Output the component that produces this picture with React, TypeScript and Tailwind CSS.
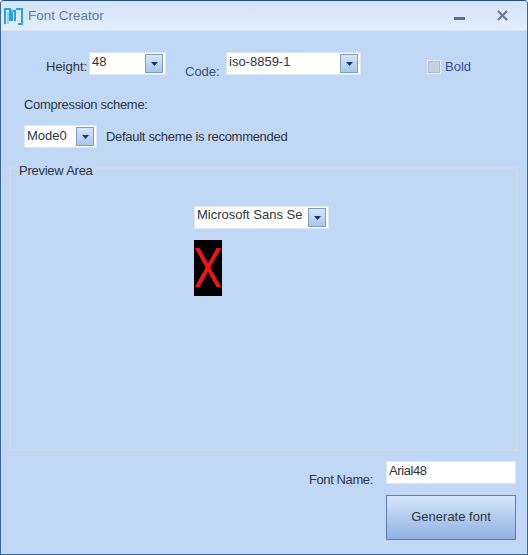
function ComboArrow() {
  return (
    <div className="flex h-[19px] w-[18px] shrink-0 items-center justify-center border border-[#7f9db9] bg-gradient-to-b from-[#d7e6fa] to-[#a9c6ee]">
      <svg width="7" height="4" viewBox="0 0 7 4">
        <path d="M0 0h7L3.5 4z" fill="#15356b" />
      </svg>
    </div>
  );
}

function Combo({ value, className, textClass = "-mt-[3px]" }: { value: string; className: string; textClass?: string }) {
  return (
    <div className={`flex h-[23px] items-center justify-between overflow-hidden border border-[#dbe7f6] bg-white pl-[2px] pr-[2px] text-[#30353c] ${className}`}>
      <span className={`whitespace-nowrap ${textClass}`}>{value}</span>
      <ComboArrow />
    </div>
  );
}

export default function App() {
  return (
    <div className="flex h-[555px] w-[528px] flex-col overflow-hidden rounded-t-[4px] border border-x-[#3d6694] border-b-[#3d6694] border-t-[#1d4f86] bg-[#c0d8f6] text-[13px] leading-[20px] text-[#2f343b] [font-family:'Liberation_Sans',Arial,sans-serif]">
      <div className="flex h-[30px] shrink-0 items-center justify-between border-b border-[#d4e4f9] bg-gradient-to-b from-[#d3e3f9] to-[#e3eefc] pl-[3px] pr-[19px]">
        <div className="flex items-center gap-[4px]">
          <svg width="20" height="20" viewBox="0 0 20 20" fill="none">
            <path d="M1 18V3h5v11h2V5h3v10" stroke="#2aa0dc" strokeWidth="2" />
            <path d="M12 3h6v15h-4" stroke="#2aa0dc" strokeWidth="2" />
            <path d="M4 6v12M8 3v3" stroke="#7cc8ee" strokeWidth="1.5" />
          </svg>
          <span className="text-[13.5px] text-[#5f7c9f]">Font Creator</span>
        </div>
        <div className="flex items-center gap-[32px]">
          <div className="mt-[5px] h-[3px] w-[11px] bg-[#5c6f86]" />
          <svg width="11" height="11" viewBox="0 0 12 12">
            <path d="M1 1l10 10M11 1L1 11" stroke="#66788f" strokeWidth="2.4" />
          </svg>
        </div>
      </div>

      <div className="flex items-start pl-[45px] pt-[21px]">
        <span className="mt-[5px] w-[43px]">Height:</span>
        <Combo value="48" className="w-[77px]" />
        <span className="ml-[19px] mt-[10px] w-[41px] text-[#36537f]">Code:</span>
        <Combo value="iso-8859-1" className="w-[135px]" />
        <div className="ml-[66px] mt-[5px] flex items-center gap-[4px] text-[#36509a]">
          <div className="flex h-[14px] w-[14px] items-center justify-center border border-[#e8eef6] bg-[#aebccf]">
            <div className="h-[10px] w-[10px] bg-[#c8d2df]" />
          </div>
          <span>Bold</span>
        </div>
      </div>

      <div className="pl-[23px] pt-[13px] tracking-[-0.3px]">Compression scheme:</div>

      <div className="flex items-center pl-[23px] pt-[10px]">
        <Combo value="Mode0" className="w-[73px]" textClass="-mt-[1px]" />
        <span className="ml-[9px] mt-[1px] tracking-[-0.3px]">Default scheme is recommended</span>
      </div>

      <div className="relative ml-[8px] mr-[9px] mt-[19px] flex h-[284px] flex-col items-start border-2 border-[#cfd9e9] pl-[183px] pt-[37px]">
        <span className="absolute left-[8px] top-[-8px] bg-[#c0d8f6] pr-[2px] tracking-[-0.25px]">Preview Area</span>
        <Combo value="Microsoft Sans Se" className="w-[135px]" textClass="-mt-[5px]" />
        <div className="mt-[11px] flex h-[56px] w-[28px] items-center justify-center bg-black">
          <svg width="28" height="56" viewBox="0 0 28 56" fill="none">
            <clipPath id="x-clip">
              <rect x="0" y="8" width="28" height="39" />
            </clipPath>
            <g clipPath="url(#x-clip)">
              <path d="M1 4L27 51M27 4L1 51" stroke="#f01414" strokeWidth="4" />
            </g>
          </svg>
        </div>
      </div>

      <div className="flex items-start pl-[308px] pt-[10px]">
        <span className="mt-[9px] w-[77px] tracking-[-0.4px]">Font Name:</span>
        <div className="flex h-[23px] w-[130px] items-center border border-[#dbe7f6] bg-white pl-[2px]">
          <span className="-mt-[3px] tracking-[-0.4px]">Arial48</span>
        </div>
      </div>

      <div className="flex pl-[385px] pt-[5px]">
        <button className="h-[45px] w-[130px] border border-[#5b7fae] bg-gradient-to-b from-[#d7e5fa] to-[#8fb2e2] pb-[2px] text-[#30353c]">
          Generate font
        </button>
      </div>
    </div>
  );
}
